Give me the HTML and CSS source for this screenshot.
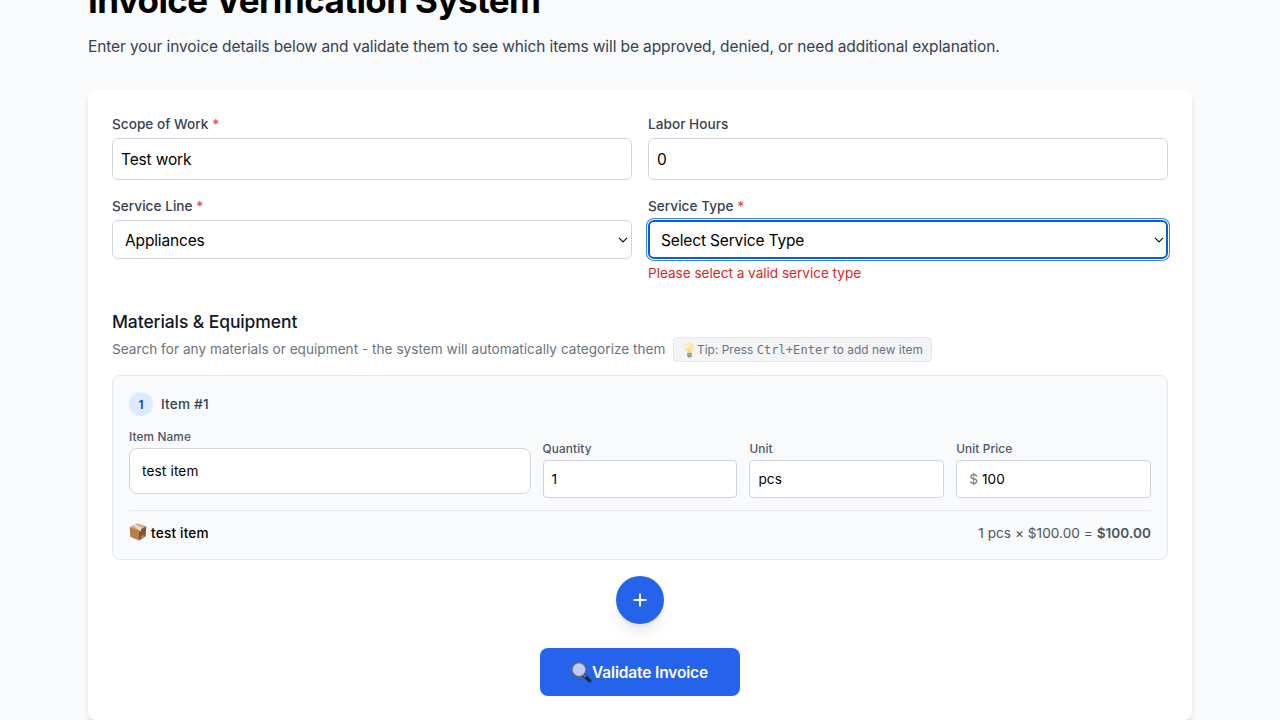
FILE: index.html
```html
<!DOCTYPE html>
<html lang="en">
<head>
<meta charset="utf-8">
<title>Invoice Verification System</title>
<link rel="stylesheet" href="styles.css">
</head>
<body>
<main class="page">
  <header class="intro">
    <h1 class="title">Invoice Verification System</h1>
    <p class="lead">Enter your invoice details below and validate them to see which items will be approved, denied, or need additional explanation.</p>
  </header>
  <form class="card">
    <div class="details">
      <div class="field">
        <label class="label" for="scope">Scope of Work <span class="required">*</span></label>
        <input class="input" id="scope" type="text" value="Test work">
      </div>
      <div class="field">
        <label class="label" for="hours">Labor Hours</label>
        <input class="input" id="hours" type="text" value="0">
      </div>
      <div class="field">
        <label class="label" for="line">Service Line <span class="required">*</span></label>
        <div class="select-wrap">
          <select class="select" id="line"><option>Appliances</option></select>
          <svg class="chevron" viewBox="0 0 10 6"><path d="M1 .8 5 4.8 9 .8"/></svg>
        </div>
      </div>
      <div class="field">
        <label class="label" for="type">Service Type <span class="required">*</span></label>
        <div class="select-wrap">
          <select class="select select-focused" id="type"><option>Select Service Type</option></select>
          <svg class="chevron" viewBox="0 0 10 6"><path d="M1 .8 5 4.8 9 .8"/></svg>
        </div>
        <p class="error">Please select a valid service type</p>
      </div>
    </div>

    <section class="materials">
      <h2 class="heading">Materials &amp; Equipment</h2>
      <div class="hint-row">
        <p class="hint">Search for any materials or equipment - the system will automatically categorize them</p>
        <div class="tip">
          <svg class="bulb" viewBox="0 0 14 16">
            <path d="M7 .7C3.9.7 2 2.9 2 5.6c0 2.2 1.8 3.4 2.4 5.7h5.2C10.2 9 12 7.8 12 5.6 12 2.9 10.1.7 7 .7Z" fill="#fde9a8"/>
            <path d="M5 3.2c-.9.8-1.2 2-.8 3.2" stroke="#fffbea" stroke-width="1.4" fill="none"/>
            <path d="M5.5 6.5 6.300 11M8.5 6.5 7.7 11" stroke="#e9bd64" stroke-width=".7" fill="none"/>
            <path d="M4.600 11h4.800v3L8.2 15.5H5.8L4.600 14Z" fill="#8f9297"/>
            <path d="M4.600 12.5h4.800" stroke="#c5c7ca" stroke-width=".7"/>
          </svg>
          <span class="tip-text">Tip: Press <kbd class="keys">Ctrl+Enter</kbd> to add new item</span>
        </div>
      </div>

      <div class="item">
        <div class="item-head">
          <span class="number">1</span>
          <span class="item-title">Item #1</span>
        </div>
        <div class="item-grid">
          <div class="cell cell-name">
            <label class="small-label" for="name">Item Name</label>
            <input class="cell-input name-input" id="name" type="text" value="test item">
          </div>
          <div class="cell">
            <label class="small-label" for="qty">Quantity</label>
            <input class="cell-input" id="qty" type="text" value="1">
          </div>
          <div class="cell">
            <label class="small-label" for="unit">Unit</label>
            <input class="cell-input" id="unit" type="text" value="pcs">
          </div>
          <div class="cell">
            <label class="small-label" for="price">Unit Price</label>
            <div class="price"><span class="currency">$</span><input class="price-input" id="price" type="text" value="100"></div>
          </div>
        </div>
        <div class="summary">
          <div class="summary-name">
            <svg class="box" viewBox="0 0 18 18">
              <path d="M.7 4 8.5.5 17.2 3.2 10 7Z" fill="#d5a375"/>
              <path d="M.7 4 10 7v10.5L1.3 13.7Z" fill="#b77c47"/>
              <path d="M10 7 17.2 3.2 16.7 13.2 10 17.5Z" fill="#85552f"/>
              <path d="M4.2 2.500 6.5 1.4 14.2 4.7 12 6v2.600l-2-1.200Z" fill="#ead9c3"/>
              <path d="m12.3 13.2 2.600-1.500v2l-2.600 1.600Z" fill="#b8926e"/>
            </svg>
            <span class="summary-text">test item</span>
          </div>
          <div class="total">1 pcs × $100.00 = <strong class="amount">$100.00</strong></div>
        </div>
      </div>
    </section>

    <div class="actions">
      <button class="add" type="button" aria-label="Add item">
        <svg class="plus" viewBox="0 0 24 24"><path d="M12 5.500v13M5.500 12h13"/></svg>
      </button>
      <button class="validate" type="button">
        <svg class="lens" viewBox="0 0 20 20">
          <path d="m12.5 13 5.300 4.900" stroke="#24262a" stroke-width="3.200" stroke-linecap="round"/>
          <path d="m11.500 12 2.500 2.300" stroke="#777b80" stroke-width="1.800"/>
          <circle cx="7.600" cy="7.300" r="6.500" fill="#bdcdf2" stroke="#62676f" stroke-width="1.300"/>
          <circle cx="7.600" cy="7.300" r="5.700" fill="none" stroke="#c7cad0" stroke-width=".6"/>
        </svg>
        <span class="validate-text">Validate Invoice</span>
      </button>
    </div>
  </form>
</main>
</body>
</html>
```
FILE: styles.css
```css
* { box-sizing: border-box; margin: 0; }
html, body { height: 720px; overflow: hidden; }
body {
  background: #f9fafb;
  color: #000;
  font-family: Inter, "Liberation Sans", sans-serif;
}
.page { width: 1104px; margin: -20px auto 0; }
.title { font-size: 35px; line-height: 40px; font-weight: 700; letter-spacing: -0.6px; white-space: nowrap; }
.lead { margin: 15px 0 31px; font-size: 15.5px; line-height: 24px; color: #374151; letter-spacing: -0.105px; white-space: nowrap; }
.card {
  display: flex;
  flex-direction: column;
  height: 630px;
  padding: 24px;
  background: #fff;
  border-radius: 8px;
  box-shadow: 0 4px 6px -1px rgba(0,0,0,.1), 0 2px 4px -2px rgba(0,0,0,.1);
}
.details { display: grid; grid-template-columns: 1fr 1fr; gap: 16px; }
.label { display: block; height: 20px; margin-bottom: 4px; font-size: 13.6px; line-height: 20px; font-weight: 500; color: #374151; letter-spacing: 0.03px; white-space: nowrap; }
.required { color: #ef4444; }
.input, .select {
  display: block;
  width: 100%;
  border: 1px solid #d1d5db;
  border-radius: 6px;
  background: #fff;
  color: #000;
  font: 15.5px/24px Inter, sans-serif;
  letter-spacing: -0.15px;
  outline: none;
}
.input { height: 42px; padding: 8px; }
.select-wrap { position: relative; }
.select { height: 39px; padding: 2px 12px 0; appearance: none; }
.select-focused { border: 2px solid #0560d0; box-shadow: 0 0 0 1px #fff, 0 0 0 2px #3b82f6; padding: 2px 11px 0; }
.chevron { position: absolute; right: 4px; top: 17px; width: 10px; height: 6px; fill: none; stroke: #111; stroke-width: 1.2; }
.error { margin-top: 4px; height: 20px; font-size: 13.6px; line-height: 20px; color: #dc2626; letter-spacing: -0.02px; white-space: nowrap; }
.materials { margin-top: 25px; }
.heading { font-size: 17.5px; line-height: 28px; font-weight: 500; color: #111827; letter-spacing: -0.1px; white-space: nowrap; }
.hint-row { display: flex; align-items: center; gap: 8px; height: 25px; margin: 1px 0 13px; }
.hint { width: 553px; padding-bottom: 2px; font-size: 13.6px; line-height: 20px; color: #6b7280; letter-spacing: 0.024px; white-space: nowrap; }
.tip { display: flex; align-items: center; width: 259px; height: 25px; padding: 0 8px; border: 1px solid #e5e7eb; border-radius: 4px; background: #f3f4f6; color: #6b7280; font-size: 11.8px; line-height: 16px; letter-spacing: 0.07px; white-space: nowrap; }
.bulb { flex: none; width: 15px; height: 16px; }
.keys { font-family: "DejaVu Sans Mono", monospace; font-size: 12px; }
.item { height: 185px; padding: 16px; border: 1px solid #e5e7eb; border-radius: 8px; background: #f9fafb; }
.item-head { display: flex; align-items: center; gap: 8px; height: 24px; margin-bottom: 12px; }
.number { display: flex; align-items: center; justify-content: center; width: 24px; height: 24px; border-radius: 50%; background: #dbeafe; color: #1e40af; font-size: 12px; font-weight: 600; }
.item-title { font-size: 13.6px; line-height: 20px; font-weight: 500; color: #374151; letter-spacing: 0.2px; }
.item-grid { display: grid; grid-template-columns: repeat(5, minmax(0, 1fr)); gap: 12px; height: 70px; }
.cell { padding-top: 13px; }
.cell-name { grid-column: span 2; padding-top: 1px; }
.small-label { display: block; height: 16px; margin-bottom: 3px; font-size: 11.8px; line-height: 16px; font-weight: 500; color: #4b5563; letter-spacing: 0.12px; }
.cell-input, .price { display: block; width: 100%; height: 38px; padding: 0 8px; border: 1px solid #d1d5db; border-radius: 4px; background: #fff; }
.cell-input, .price-input { color: #000; font: 13.6px/20px Inter, sans-serif; letter-spacing: 0.15px; outline: none; }
.cell-name .name-input { height: 46px; padding: 0 12px; border-radius: 8px; }
.price { display: flex; align-items: center; gap: 4px; padding-left: 12px; }
.currency { font-size: 13.6px; line-height: 20px; color: #6b7280; }
.price-input { min-width: 0; flex: 1; padding: 0; border: 0; background: transparent; }
.summary { display: flex; align-items: center; justify-content: space-between; height: 37px; margin-top: 12px; padding-top: 8px; border-top: 1px solid #e5e7eb; font-size: 13.6px; line-height: 20px; }
.summary-name { display: flex; align-items: center; gap: 4px; font-weight: 500; letter-spacing: 0.2px; }
.box { width: 18px; height: 18px; margin-bottom: 2px; }
.total { color: #4b5563; letter-spacing: 0.04px; white-space: nowrap; }
.amount { font-weight: 600; }
.actions { display: flex; flex-direction: column; align-items: center; gap: 24px; margin-top: 16px; }
.add { display: flex; align-items: center; justify-content: center; width: 48px; height: 48px; padding: 0; border: 0; border-radius: 50%; background: #2563eb; box-shadow: 0 10px 15px -3px rgba(0,0,0,.1), 0 4px 6px -4px rgba(0,0,0,.1); }
.plus { width: 24px; height: 24px; fill: none; stroke: #fff; stroke-width: 1.8; }
.validate { display: flex; align-items: center; width: 200px; height: 48px; padding: 0 31px; border: 0; border-radius: 8px; background: #2563eb; color: #fff; font: 600 15.5px/24px Inter, sans-serif; white-space: nowrap; }
.lens { flex: none; width: 21px; height: 21px; }
.validate-text { padding-top: 2px; letter-spacing: -0.15px; }
```
